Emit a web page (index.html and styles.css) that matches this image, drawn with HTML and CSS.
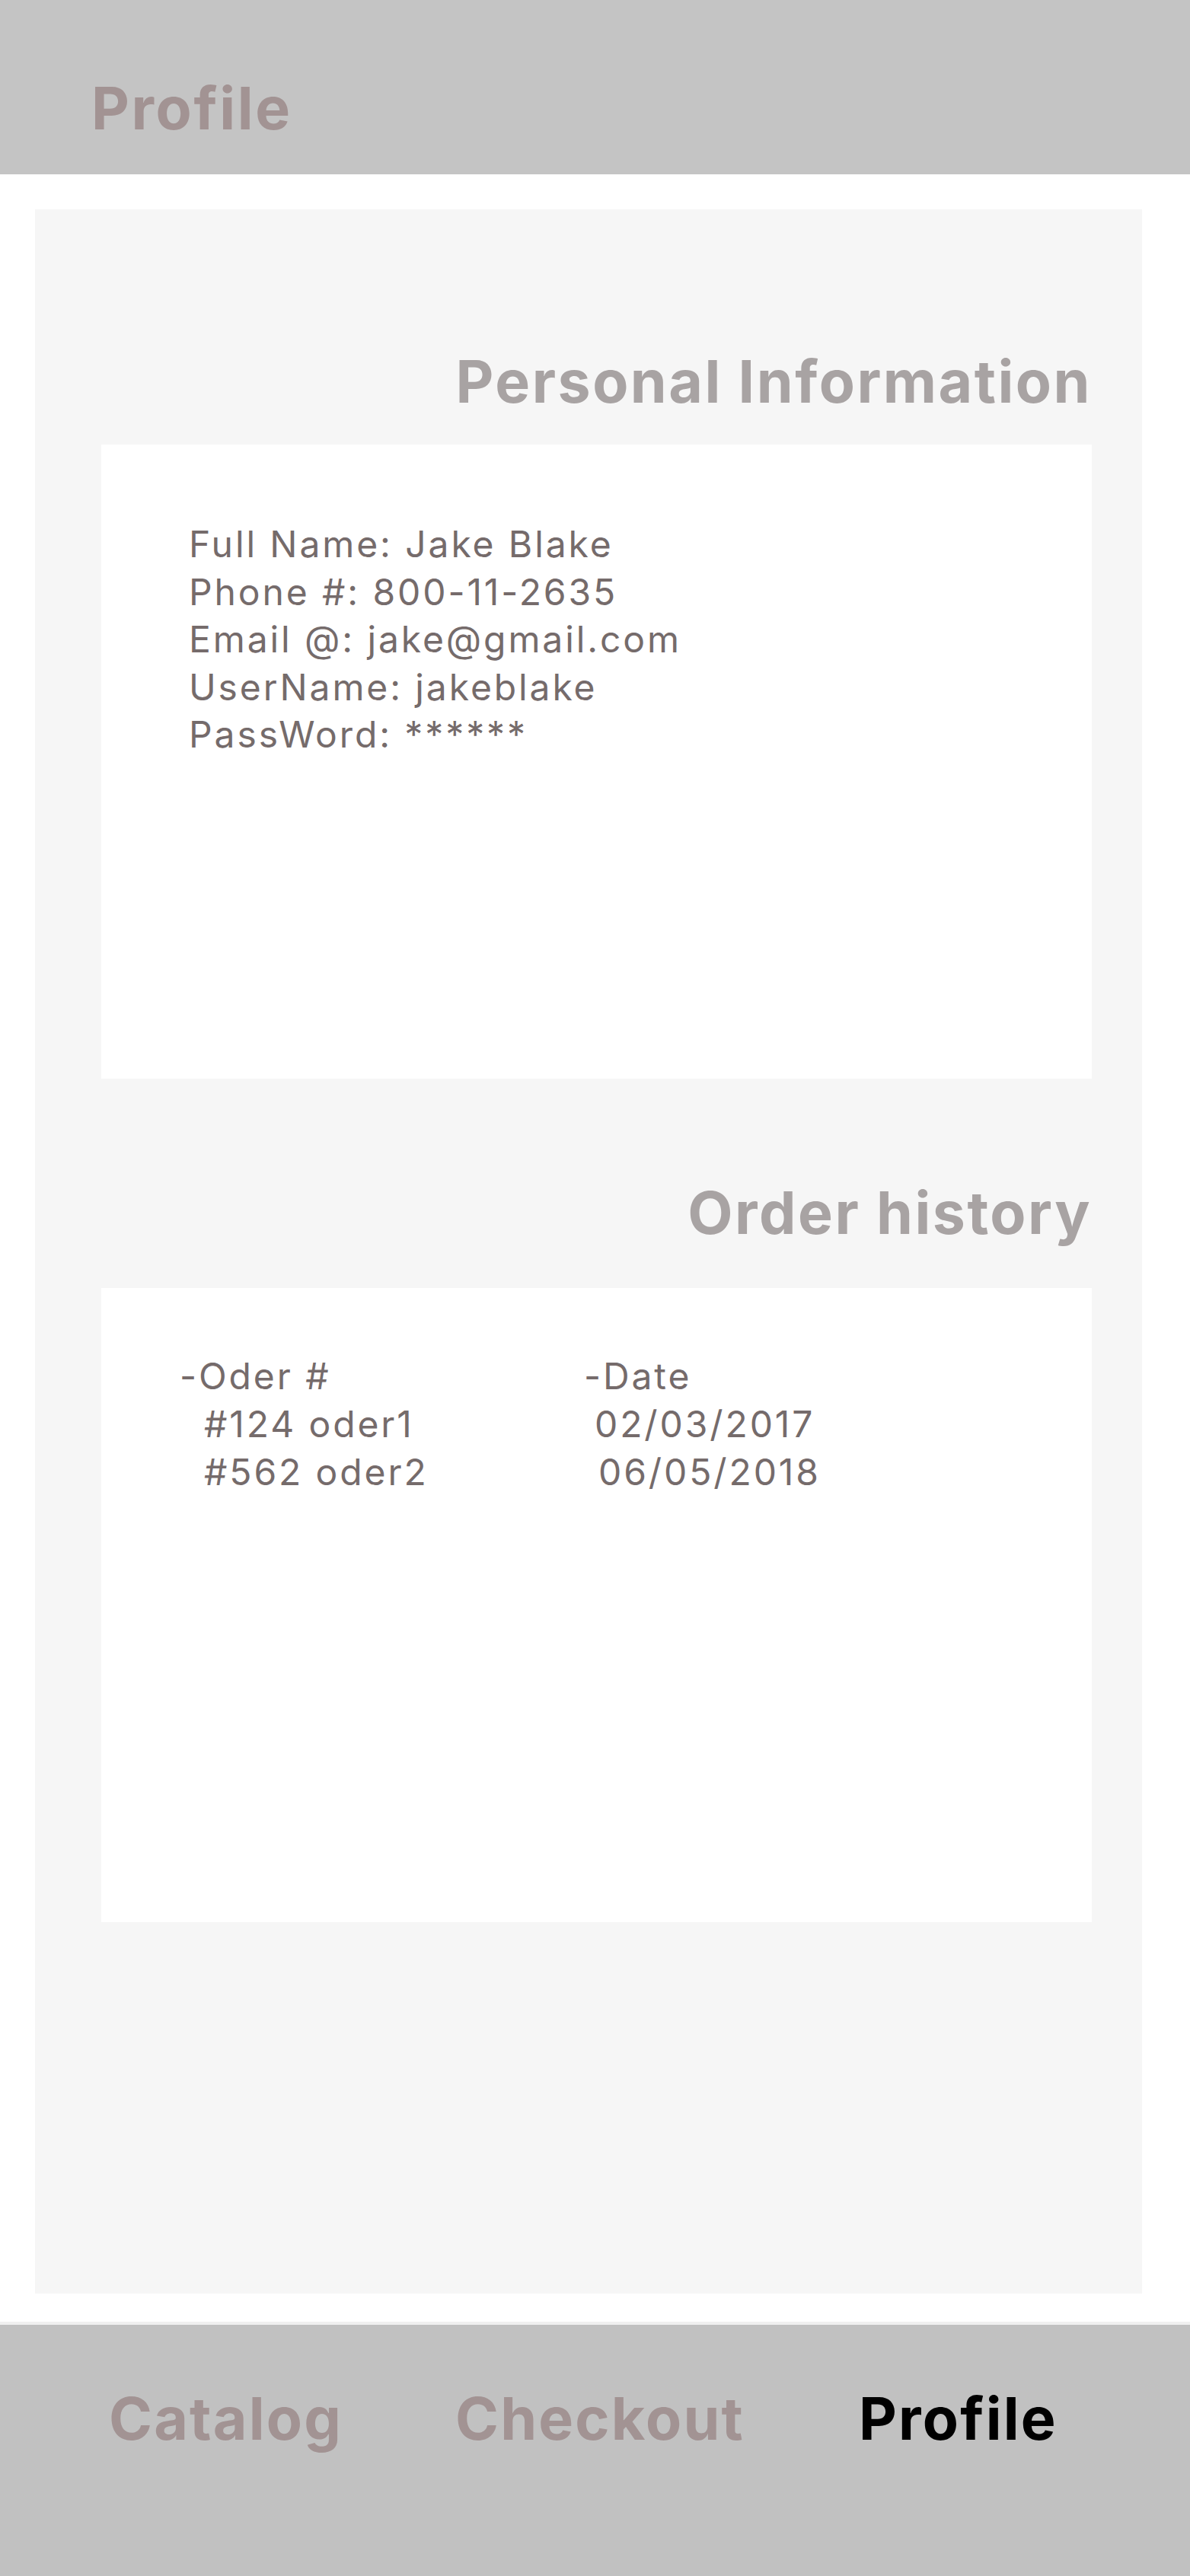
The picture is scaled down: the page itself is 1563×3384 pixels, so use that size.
FILE: index.html
```html
<!DOCTYPE html>
<html lang="en">
<head>
<meta charset="utf-8">
<title>Profile</title>
<link rel="stylesheet" href="styles.css">
</head>
<body>
<div class="app">
  <header class="topbar">
    <h1 class="topbar-title">Profile</h1>
  </header>
  <main class="main">
    <section class="panel">
      <h2 class="section-title section-title--first">Personal Information</h2>
      <div class="card card--info">
        <p class="info-line">Full Name: Jake Blake</p>
        <p class="info-line">Phone #: 800-11-2635</p>
        <p class="info-line">Email @: jake@gmail.com</p>
        <p class="info-line">UserName: jakeblake</p>
        <p class="info-line">PassWord: ******</p>
      </div>
      <h2 class="section-title section-title--second">Order history</h2>
      <div class="card card--orders">
        <div class="order-row">
          <span class="order-col order-col--id">-Oder #</span>
          <span class="order-col order-col--date">-Date</span>
        </div>
        <div class="order-row order-row--item">
          <span class="order-col order-col--id">#124 oder1</span>
          <span class="order-col order-col--date">02/03/2017</span>
        </div>
        <div class="order-row order-row--item order-row--last">
          <span class="order-col order-col--id">#562 oder2</span>
          <span class="order-col order-col--date">06/05/2018</span>
        </div>
      </div>
    </section>
  </main>
  <nav class="tabbar">
    <a class="tab tab--catalog">Catalog</a>
    <a class="tab tab--checkout">Checkout</a>
    <a class="tab tab--profile tab--active">Profile</a>
  </nav>
</div>
</body>
</html>
```

FILE: styles.css
```css
* { box-sizing: border-box; }

html, body {
  margin: 0;
  padding: 0;
  background: #ffffff;
}

body {
  font-family: Inter, "Liberation Sans", sans-serif;
}

.app {
  width: 1563px;
  min-height: 3384px;
  display: flex;
  flex-direction: column;
}

.topbar {
  height: 229px;
  background: #c4c4c4;
  padding: 104px 0 0 120px;
}

.topbar-title {
  margin: 0;
  font-size: 77px;
  line-height: 77px;
  font-weight: 700;
  letter-spacing: 2.6px;
  color: #a29393;
}

.main {
  padding: 46px 63px 37px 46px;
}

.panel {
  height: 2738px;
  background: #f6f6f6;
  padding: 0 66px 0 87px;
  display: flex;
  flex-direction: column;
}

.section-title {
  margin: 0;
  font-size: 77px;
  line-height: 77px;
  font-weight: 700;
  letter-spacing: 2.5px;
  color: #a8a3a3;
  text-align: right;
}

.section-title--first { margin-top: 188px; margin-bottom: 44px; }
.section-title--second { margin-top: 138px; margin-bottom: 60px; }

.card {
  background: #ffffff;
  height: 833px;
  color: #756b6b;
  font-size: 48px;
  line-height: 62.5px;
  letter-spacing: 2.9px;
}

.card--info {
  padding: 100px 0 0 115px;
}

.info-line {
  margin: 0;
}

.card--orders {
  padding: 84px 0 0 103px;
}

.order-row {
  display: flex;
  line-height: 63px;
}

.order-col--id {
  width: 531px;
}

.order-row--item .order-col--id {
  padding-left: 32px;
}

.order-row--item .order-col--date {
  padding-left: 14px;
}

.order-row--last .order-col--date {
  padding-left: 19px;
}

.tabbar {
  height: 334px;
  background: #c1c1c1;
  border-top: 4px solid #f0f0f0;
  display: flex;
  align-items: flex-start;
  padding: 85px 0 0 143px;
}

.tab {
  font-size: 77px;
  line-height: 77px;
  font-weight: 700;
  letter-spacing: 2.2px;
  color: #a29393;
  text-decoration: none;
}

.tab--catalog { width: 455px; }
.tab--checkout { width: 530px; }

.tab--active { color: #000000; }
```
